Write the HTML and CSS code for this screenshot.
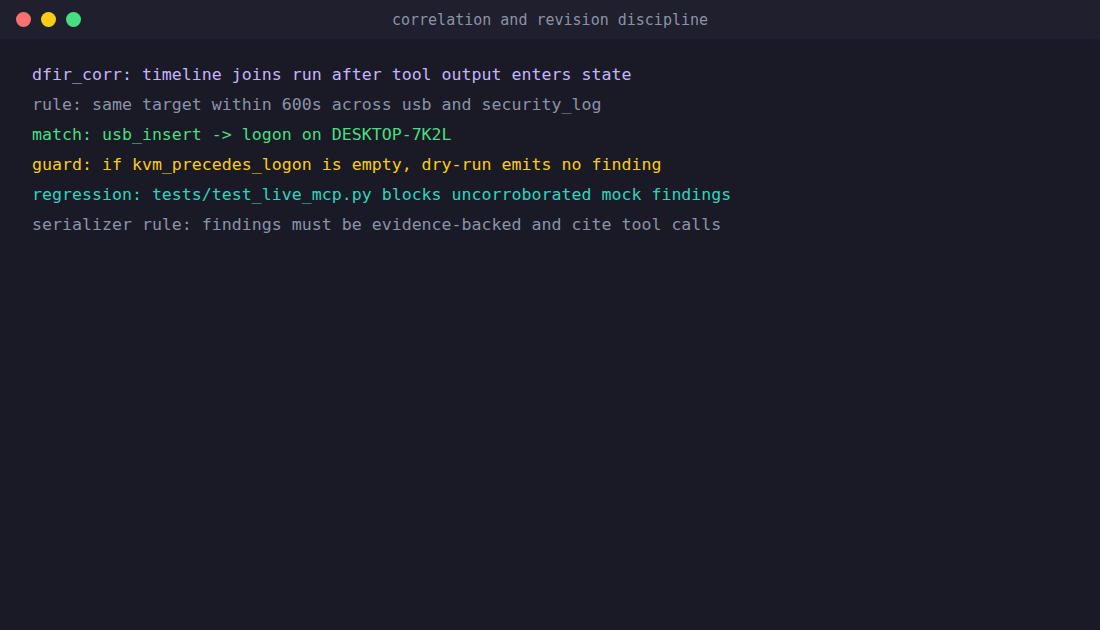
FILE: index.html
```html
<!DOCTYPE html>
<html>
<head>
<meta charset="utf-8">
<link rel="stylesheet" href="styles.css">
</head>
<body>
<div class="window">
  <div class="titlebar">
    <div class="lights">
      <span class="light red"></span>
      <span class="light yellow"></span>
      <span class="light green"></span>
    </div>
    <div class="title">correlation and revision discipline</div>
  </div>
  <div class="content">
    <div class="line c-purple">dfir_corr: timeline joins run after tool output enters state</div>
    <div class="line c-gray">rule: same target within 600s across usb and security_log</div>
    <div class="line c-green">match: usb_insert -&gt; logon on DESKTOP-7K2L</div>
    <div class="line c-yellow">guard: if kvm_precedes_logon is empty, dry-run emits no finding</div>
    <div class="line c-teal">regression: tests/test_live_mcp.py blocks uncorroborated mock findings</div>
    <div class="line c-gray">serializer rule: findings must be evidence-backed and cite tool calls</div>
  </div>
</div>
</body>
</html>
```

FILE: styles.css
```css
html, body {
  margin: 0;
  padding: 0;
  background: #1a1a26;
}
.window {
  width: 1100px;
  height: 630px;
  display: flex;
  flex-direction: column;
  background: #1a1a26;
  font-family: "DejaVu Sans Mono", monospace;
}
.titlebar {
  height: 39px;
  background: #1f1f2e;
  display: flex;
  align-items: center;
  position: relative;
}
.lights {
  display: flex;
  gap: 10px;
  padding-left: 16px;
}
.light {
  width: 15px;
  height: 15px;
  border-radius: 50%;
  display: block;
}
.red { background: #f87171; }
.yellow { background: #facc15; }
.green { background: #4ade80; }
.title {
  position: absolute;
  left: 0;
  right: 0;
  top: 1px;
  height: 39px;
  line-height: 39px;
  text-align: center;
  font-size: 15px;
  color: #8b93a7;
}
.content {
  padding: 21px 32px;
}
.line {
  font-size: 16.6px;
  line-height: 30px;
  white-space: pre;
}
.c-purple { color: #c4b5fd; }
.c-gray { color: #8b93a7; }
.c-green { color: #4ade80; }
.c-yellow { color: #facc15; }
.c-teal { color: #2dd4bf; }
```
